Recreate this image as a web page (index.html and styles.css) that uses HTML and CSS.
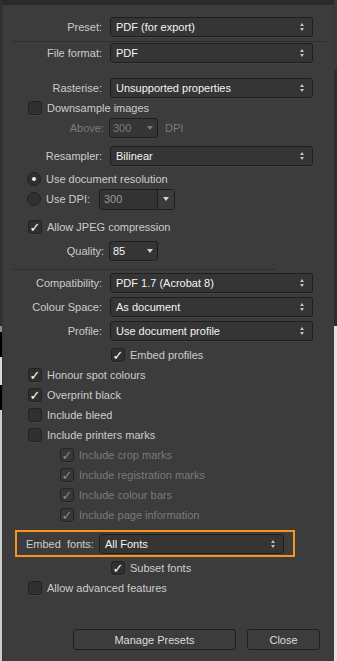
FILE: index.html
```html
<!DOCTYPE html>
<html lang="en">
  <head>
    <meta charset="UTF-8" />
    <title>Export PDF</title>
    <link rel="stylesheet" href="styles.css">
  </head>
  <body>
    <div class="dialog">
      <div class="row">
        <span class="label">Preset:</span>
        <div class="select"><span class="value">PDF (for export)</span><span class="stepper"><i class="up"></i><i class="down"></i></span></div>
      </div>
      <div class="sep top-sep"></div>
      <div class="row mt1">
        <span class="label">File format:</span>
        <div class="select"><span class="value">PDF</span><span class="stepper"><i class="up"></i><i class="down"></i></span></div>
      </div>

      <div class="row mt15">
        <span class="label">Rasterise:</span>
        <div class="select"><span class="value">Unsupported properties</span><span class="stepper"><i class="up"></i><i class="down"></i></span></div>
      </div>
      <div class="check">
        <span class="box"></span><span>Downsample images</span>
      </div>
      <div class="row short off">
        <span class="label">Above:</span>
        <div class="inline">
          <div class="drop"><span class="value">300</span><i class="tri"></i></div>
          <span class="unit">DPI</span>
        </div>
      </div>
      <div class="row mt8">
        <span class="label">Resampler:</span>
        <div class="select"><span class="value">Bilinear</span><span class="stepper"><i class="up"></i><i class="down"></i></span></div>
      </div>
      <div class="check radio-row mt3">
        <span class="radio on"><i></i></span><span>Use document resolution</span>
      </div>
      <div class="check radio-row dpi">
        <span class="radio"></span><span class="dpi-label">Use DPI:</span>
        <div class="combo">
          <span class="field">300</span><span class="combo-btn"><i class="tri"></i></span>
        </div>
      </div>
      <div class="check mt8">
        <span class="box">&#10003;</span><span>Allow JPEG compression</span>
      </div>
      <div class="row short mt4">
        <span class="label">Quality:</span>
        <div class="inline">
          <div class="drop"><span class="value">85</span><i class="tri"></i></div>
        </div>
      </div>
      <div class="sep mid-sep"></div>

      <div class="row mt3">
        <span class="label">Compatibility:</span>
        <div class="select"><span class="value">PDF 1.7 (Acrobat 8)</span><span class="stepper"><i class="up"></i><i class="down"></i></span></div>
      </div>
      <div class="row mt4">
        <span class="label">Colour Space:</span>
        <div class="select"><span class="value">As document</span><span class="stepper"><i class="up"></i><i class="down"></i></span></div>
      </div>
      <div class="row mt4">
        <span class="label">Profile:</span>
        <div class="select"><span class="value">Use document profile</span><span class="stepper"><i class="up"></i><i class="down"></i></span></div>
      </div>
      <div class="check indent mt4">
        <span class="box">&#10003;</span><span>Embed profiles</span>
      </div>
      <div class="check">
        <span class="box">&#10003;</span><span>Honour spot colours</span>
      </div>
      <div class="check">
        <span class="box">&#10003;</span><span>Overprint black</span>
      </div>
      <div class="check">
        <span class="box"></span><span>Include bleed</span>
      </div>
      <div class="check">
        <span class="box"></span><span>Include printers marks</span>
      </div>
      <div class="check sub off">
        <span class="box">&#10003;</span><span>Include crop marks</span>
      </div>
      <div class="check sub off">
        <span class="box">&#10003;</span><span>Include registration marks</span>
      </div>
      <div class="check sub off">
        <span class="box">&#10003;</span><span>Include colour bars</span>
      </div>
      <div class="check sub off">
        <span class="box">&#10003;</span><span>Include page information</span>
      </div>

      <div class="highlight">
        <span class="embed-label">Embed  fonts:</span>
        <div class="select"><span class="value">All Fonts</span><span class="stepper"><i class="up"></i><i class="down"></i></span></div>
      </div>
      <div class="check indent mt1">
        <span class="box">&#10003;</span><span>Subset fonts</span>
      </div>
      <div class="check">
        <span class="box"></span><span>Allow advanced features</span>
      </div>

      <div class="actions">
        <button class="btn wide">Manage Presets</button>
        <button class="btn">Close</button>
      </div>
    </div>
  </body>
</html>
```

FILE: styles.css
```css
body {
  margin: 0;
  min-height: 661px;
  background:
    linear-gradient(#303030 0 326px, #8c8c8c 326px 332px, #000 332px 357px, #d9d9d9 357px 385px, #000 385px 410px, #cdcdcd 410px) left top / 2px 100% no-repeat,
    linear-gradient(#3a3a3a 0 70px, #2d2d2d 70px 326px, #e2e2e2 326px) right top / 3px 100% no-repeat,
    #2a2a2a;
  font-family: "Liberation Sans", Arial, sans-serif;
  font-size: 11px;
  color: #cccccc;
}

.dialog {
  box-sizing: border-box;
  margin: 5px 3px 0 2px;
  height: 656px;
  padding-top: 12px;
  background: #3c3c3c;
  box-shadow: inset 1px 0 0 #343434;
}

/* label + control rows */
.row {
  display: grid;
  grid-template-columns: 100px 203px;
  column-gap: 8px;
  align-items: center;
  height: 20px;
}
.row.short {
  grid-template-columns: 102px 200px;
  column-gap: 5px;
}
.label {
  text-align: right;
}

.select {
  box-sizing: border-box;
  display: flex;
  align-items: center;
  height: 20px;
  padding: 0 8px 0 5px;
  background: #353535;
  border: 1px solid #1e1e1e;
  border-radius: 3px;
  box-shadow: 0 1px 0 #444;
  color: #f4f4f4;
}
.value {
  flex: 1;
}
.stepper {
  display: flex;
  flex-direction: column;
  gap: 2px;
}
.stepper i {
  width: 0;
  height: 0;
  border-left: 2.5px solid transparent;
  border-right: 2.5px solid transparent;
}
.stepper .up {
  border-bottom: 3px solid #c4c4c4;
}
.stepper .down {
  border-top: 3px solid #c4c4c4;
}

.tri {
  width: 0;
  height: 0;
  border-left: 3px solid transparent;
  border-right: 3px solid transparent;
  border-top: 4px solid #d4d4d4;
}

.inline {
  display: flex;
  align-items: center;
  gap: 7px;
}
.drop {
  box-sizing: border-box;
  display: flex;
  align-items: center;
  width: 49px;
  height: 20px;
  padding: 0 4px 0 3px;
  background: #353535;
  border: 1px solid #1e1e1e;
  border-radius: 3px;
  box-shadow: 0 1px 0 #444;
  color: #f4f4f4;
}
.off,
.off .drop {
  color: #7a7a7a;
}
.off .tri {
  border-top-color: #7a7a7a;
}

.sep {
  height: 1px;
  background: #2f2f2f;
}
.top-sep {
  margin: 4px 7px 0 10px;
}
.mid-sep {
  margin: 8px 58px 0 11px;
}

/* checkboxes and radios */
.check {
  display: flex;
  align-items: center;
  gap: 5px;
  height: 20px;
  padding-left: 26px;
}
.check.indent {
  padding-left: 109px;
}
.check.sub {
  padding-left: 58px;
}
.box {
  box-sizing: border-box;
  display: flex;
  align-items: center;
  justify-content: center;
  width: 14px;
  height: 14px;
  background: #303030;
  border: 1px solid #222;
  border-radius: 3px;
  box-shadow: 0 1px 0 #444;
  color: #fff;
  font-family: "DejaVu Sans", sans-serif;
  font-size: 13px;
  line-height: 1;
}
.off .box {
  color: #8a8a8a;
  background: #373737;
}

.radio-row {
  padding-left: 25px;
}
.radio {
  box-sizing: border-box;
  display: flex;
  align-items: center;
  justify-content: center;
  width: 14px;
  height: 14px;
  background: #303030;
  border: 1px solid #222;
  border-radius: 50%;
}
.radio i {
  width: 4px;
  height: 4px;
  border-radius: 50%;
  background: #eee;
}

.dpi-label {
  width: 48px;
}
.combo {
  box-sizing: border-box;
  display: flex;
  width: 76px;
  height: 21px;
  background: #333;
  border: 1px solid #1e1e1e;
  border-radius: 3px;
}
.field {
  flex: 1;
  padding-left: 4px;
  line-height: 19px;
  color: #9a9a9a;
}
.combo-btn {
  display: flex;
  align-items: center;
  justify-content: center;
  width: 16px;
  border-left: 1px solid #1e1e1e;
  background: #3a3a3a;
}

/* embed fonts box */
.highlight {
  box-sizing: border-box;
  display: flex;
  align-items: center;
  gap: 7px;
  width: 280px;
  height: 27px;
  margin: 5px 0 0 13px;
  padding: 0 9px;
  border: 2px solid #f7931e;
}
.embed-label {
  white-space: pre;
  width: 66px;
}
.highlight .select {
  flex: 1;
}

.actions {
  display: flex;
  justify-content: flex-end;
  gap: 11px;
  margin-top: 31px;
  padding-right: 14px;
}
.btn {
  width: 73px;
  height: 21px;
  padding: 0;
  background: #3c3c3c;
  border: 1px solid #1e1e1e;
  border-radius: 3px;
  color: #dcdcdc;
  font: inherit;
}
.btn.wide {
  width: 163px;
}

.mt1 { margin-top: 1px; }
.mt3 { margin-top: 3px; }
.mt4 { margin-top: 4px; }
.mt8 { margin-top: 8px; }
.mt15 { margin-top: 15px; }
```
